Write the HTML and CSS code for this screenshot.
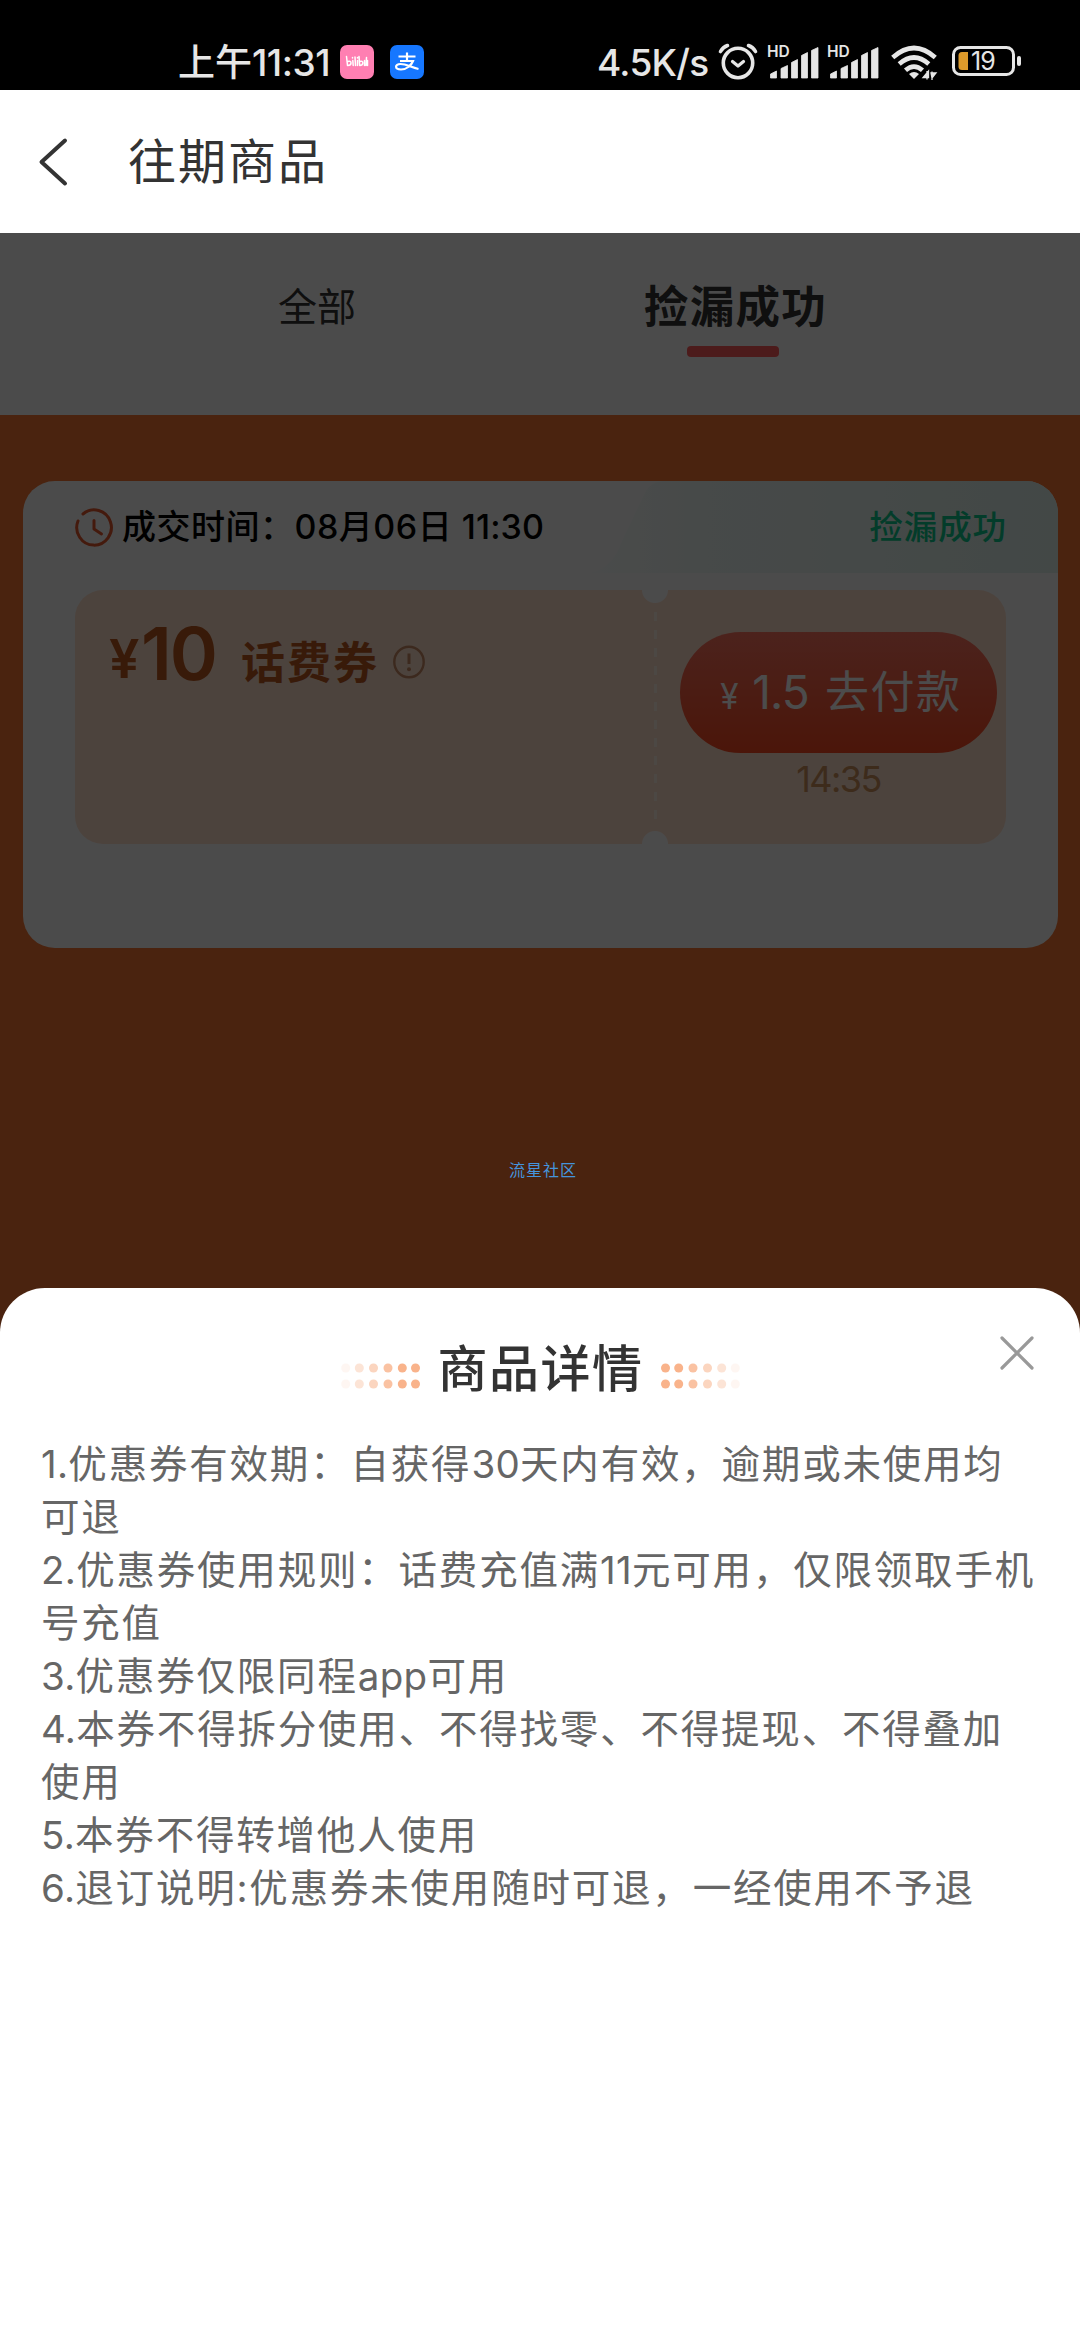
FILE: index.html
```html
<!DOCTYPE html>
<html lang="zh-CN">
<head>
<meta charset="utf-8">
<title>往期商品</title>
<link rel="stylesheet" href="styles.css">
</head>
<body>
<div class="screen">
  <div class="status">
    <div class="status-left">
      <span class="clock-text">上午<span class="clock-digits">11:31</span></span>
      <svg class="app-icon" width="34" height="34" viewBox="0 0 34 34">
        <rect width="34" height="34" rx="7" fill="#ff7fb2"/>
        <g fill="none" stroke="#fff" stroke-width="1.5" stroke-linecap="round" stroke-linejoin="round">
          <path d="M6.5 11.5l1 9M7.5 16.500q3.500-1 3.500 1.500t-3.400 2.500M12.800 15.500l.4 5M12.500 12.500v.6M15 12l.5 8.500M17.500 15.500v5M17.500 12.500v.6M19 11.500l.7 9M19.500 16.500q3.500-1 3.300 1.500t-3.100 2.500M24.500 15.500v5M26.500 12.500l-.5 8M27.500 15.500v5"/>
        </g>
      </svg>
      <svg class="app-icon" width="34" height="34" viewBox="0 0 34 34">
        <rect width="34" height="34" rx="7" fill="#1677ff"/>
        <path d="M8.500 11.500h17M17 7.500v8.500M10 16h13c-1.500 4-6 8.500-12 8.500-6.500 0-6.500-5.500-.5-5.500 6 0 10 3.200 18 5" fill="none" stroke="#fff" stroke-width="2.200"/>
      </svg>
    </div>
    <div class="status-right">
      <span class="speed">4.5K/s</span>
      <svg class="alarm" width="40" height="38" viewBox="0 0 40 38" fill="none" stroke="#e6e6e6" stroke-linecap="round">
        <circle cx="20" cy="20" r="14.700" stroke-width="3.600"/>
        <path d="M2.500 8.500Q5 4 9.500 2.500M37.500 8.500Q35 4 30.500 2.500" stroke-width="3.600"/>
        <path d="M14.500 18.500l5.500 4.500 5.500-4.500" stroke-width="3.200" stroke-linejoin="round"/>
      </svg>
      <div class="signal"><span class="hd">HD</span>
        <svg width="50" height="34" viewBox="0 0 50 34" fill="#e6e6e6"><path d="M1.500 33v-4l6-3v7zM12 33V23.500l6.500-3V33zM22.500 33V17.500l6-3V33zM32.500 33V10.500l6-3V33zM42.500 33V5.500l6.500-3V33z" stroke="#e6e6e6" stroke-linejoin="round" stroke-width=".8"/></svg>
      </div>
      <div class="signal"><span class="hd">HD</span>
        <svg width="50" height="34" viewBox="0 0 50 34" fill="#e6e6e6"><path d="M1.500 33v-4l6-3v7zM12 33V23.500l6.500-3V33zM22.500 33V17.500l6-3V33zM32.500 33V10.500l6-3V33zM42.500 33V5.500l6.500-3V33z" stroke="#e6e6e6" stroke-linejoin="round" stroke-width=".8"/></svg>
      </div>
      <svg class="wifi" width="48" height="36" viewBox="0 0 48 36">
        <g fill="none" stroke="#e6e6e6" stroke-width="4.600"><path d="M1.700 12.500Q23 -6.500 44.300 12.500"/><path d="M8.200 19Q23 6 37.800 19"/><path d="M14.500 25.300Q23 17.800 31.500 25.300"/></g>
        <path d="M23 34l-5-5q5-4 10 0z" fill="#e6e6e6"/>
        <path d="M32 32.500h5.500V26zM36 26v8.500M41 35v-8.500M40 28h5l-4 5z" fill="#e6e6e6" stroke="#e6e6e6" stroke-width="1.300"/>
      </svg>
      <svg class="battery" width="70" height="32" viewBox="0 0 70 32">
        <rect x="1.500" y="2.500" width="60" height="27" rx="7" fill="none" stroke="#e6e6e6" stroke-width="3"/>
        <rect x="65" y="11" width="4" height="10" rx="2" fill="#e6e6e6"/>
        <path d="M10 7h6v18h-6q-3.500 0-3.500-3.500v-11Q6.500 7 10 7z" fill="#dc9a2b"/>
        <text x="19" y="24.500" class="battery-text">19</text>
      </svg>
    </div>
  </div>

  <div class="navbar">
    <svg width="32" height="50" viewBox="0 0 32 50"><path d="M27 3.500L3.500 25 27 46.500" fill="none" stroke="#333" stroke-width="4" stroke-linecap="round" stroke-linejoin="round"/></svg>
    <h1>往期商品</h1>
  </div>

  <div class="page">
    <div class="tabs">
      <div class="tab">全部</div>
      <div class="tab active">捡漏成功</div>
    </div>
    <div class="card">
      <div class="card-head">
        <svg class="ribbon" width="468" height="92" viewBox="0 0 468 92">
          <defs><linearGradient id="mint" x1="0" x2="1"><stop offset="0" stop-color="#f8fcfb"/><stop offset=".25" stop-color="#edf7f4"/><stop offset="1" stop-color="#dff1ec"/></linearGradient></defs>
          <path d="M0 92Q22 88 32 60L54 14Q60 0 74 0H468V92Z" fill="url(#mint)"/>
        </svg>
        <svg class="clock" width="40" height="40" viewBox="0 0 40 40" fill="none" stroke="#e4572e" stroke-width="3" stroke-linecap="round">
          <path d="M9 6A17.300 17.600 0 1 1 4 13"/><path d="M20 12.500V21l7.500 5" stroke-linejoin="round"/>
        </svg>
        <span class="deal">成交时间：08月06日 <span class="deal-time">11:30</span></span>
        <span class="state">捡漏成功</span>
      </div>
      <div class="coupon">
        <div class="worth">
          <span class="yen">¥</span><span class="amount">10</span><span class="kind">话费券</span>
          <svg class="info" width="34" height="36" viewBox="0 0 34 36"><ellipse cx="17" cy="18" rx="14.700" ry="15.300" fill="none" stroke="#c88a64" stroke-width="2.400"/><path d="M17 9.500v10.500" stroke="#c88a64" stroke-width="3"/><circle cx="17" cy="25.200" r="2" fill="#c88a64"/></svg>
        </div>
        <div class="buy">
          <button><span class="byen">¥</span><span class="price">1.5</span><span>去付款</span></button>
          <div class="countdown">14:35</div>
        </div>
      </div>
    </div>
    <div class="mask"></div>
  </div>

  <div class="watermark">流星社区</div>

  <div class="sheet">
    <svg class="close" width="38" height="38" viewBox="0 0 38 38"><path d="M4 4l30 30M34 4L4 34" stroke="#999" stroke-width="3.200" stroke-linecap="round"/></svg>
    <div class="sheet-title">
      <svg width="80" height="26" viewBox="0 0 80 26" fill="#f9b38b">
        <g id="dots">
          <g opacity=".1"><circle cx="5.700" cy="5" r="4.500"/><circle cx="5.700" cy="21" r="4.500"/></g>
          <g opacity=".35"><circle cx="19.300" cy="5" r="4.500"/><circle cx="19.300" cy="21" r="4.500"/></g>
          <g opacity=".55"><circle cx="33.500" cy="5" r="4.500"/><circle cx="33.500" cy="21" r="4.500"/></g>
          <g opacity=".8"><circle cx="48" cy="5" r="4.500"/><circle cx="48" cy="21" r="4.500"/></g>
          <circle cx="62.300" cy="5" r="4.500"/><circle cx="62.300" cy="21" r="4.500"/>
          <circle cx="75.500" cy="5" r="4.500"/><circle cx="75.500" cy="21" r="4.500"/>
        </g>
      </svg>
      <h2>商品详情</h2>
      <svg width="80" height="26" viewBox="0 0 80 26" fill="#f9b38b"><use href="#dots" transform="translate(80 0) scale(-1 1)"/></svg>
    </div>
    <div class="rules">
      <p><span class="num">1.</span>优惠券有效期：自获得<span class="num">30</span>天内有效，逾期或未使用均<br>可退</p>
      <p><span class="num">2.</span>优惠券使用规则：话费充值满<span class="num">11</span>元可用，仅限领取手机<br>号充值</p>
      <p><span class="num">3.</span>优惠券仅限同程<span class="latin">app</span>可用</p>
      <p><span class="num">4.</span>本券不得拆分使用、不得找零、不得提现、不得叠加<br>使用</p>
      <p><span class="num">5.</span>本券不得转增他人使用</p>
      <p><span class="num">6.</span>退订说明:优惠券未使用随时可退，一经使用不予退</p>
    </div>
  </div>
</div>
</body>
</html>
```
FILE: styles.css
```css
* { box-sizing: border-box; margin: 0; padding: 0; }
body { width: 1080px; font-family: Inter, "Noto Sans CJK SC", sans-serif; background: #fff; }
svg { display: block; flex: none; }
.screen { position: relative; width: 1080px; height: 2340px; overflow: hidden; display: flex; flex-direction: column; white-space: nowrap; }

.status { height: 90px; flex: none; background: #000; color: #e6e6e6; display: flex; justify-content: space-between; padding: 34px 58px 0 178px; font-size: 36px; line-height: 54px; }
.status-left, .status-right { display: flex; height: 54px; }
.clock-text { width: 162px; font-weight: 500; font-size: 37px; line-height: 58px; }
.clock-digits { letter-spacing: -.5px; }
.app-icon { margin: 11px 16px 0 0; }
.speed { width: 121px; font-size: 37px; line-height: 57px; font-weight: 500; letter-spacing: -.7px; }
.alarm { margin: 9px 11px 0 0; }
.signal { position: relative; width: 50px; margin-right: 10px; padding-top: 11px; }
.hd { position: absolute; left: -2px; top: 9px; font: 600 15.500px/18px Inter, sans-serif; }
.wifi { margin: 11px 13px 0 2px; }
.battery { margin-top: 11px; }
.battery-text { font: 400 25px Inter, sans-serif; fill: #e6e6e6; letter-spacing: -1px; }

.navbar { height: 143px; flex: none; background: #fff; display: flex; align-items: center; padding-left: 38px; }
.navbar h1 { margin-left: 58px; font-size: 48px; font-weight: 400; line-height: 72px; letter-spacing: 2px; color: #333; }

.page { position: relative; height: 2107px; flex: none; background: #f77532; }
.mask { position: absolute; inset: 0; background: rgba(0, 0, 0, .7); }
.tabs { height: 182px; background: #fcfcfc; display: grid; grid-template-columns: 416px 416px; justify-content: center; padding: 39px 30px 0 0; text-align: center; }
.tab { font-size: 39px; line-height: 70px; color: #333; }
.tab.active { font-size: 44.500px; font-weight: 600; letter-spacing: 1.300px; padding-top: 0; text-indent: 5px; }
.tab.active::after { content: ""; display: block; width: 92px; height: 11px; margin: 4px auto 0; border-radius: 4px; background: #ff5a5d; }

.card { width: 1035px; height: 467px; margin: 66px 0 0 23px; border-radius: 32px; background: #fcfcfc; overflow: hidden; }
.card-head { position: relative; height: 92px; display: flex; align-items: center; padding: 0 51px 0 51px; }
.ribbon { position: absolute; right: 0; top: 0; }
.clock { margin-top: 2px; }
.deal { margin-left: 8px; font-size: 34px; line-height: 50px; font-weight: 500; color: #000; letter-spacing: .5px; }
.deal-time { letter-spacing: .1px; }
.state { position: relative; margin-left: auto; font-size: 33.500px; line-height: 50px; font-weight: 500; letter-spacing: .9px; color: #0cc98c; }

.coupon { width: 931px; height: 254px; margin: 17px 0 0 52px; border-radius: 28px; display: grid; grid-template-columns: 580px 351px;
  background:
    radial-gradient(circle at 580px 0, #fcfcfc 12.500px, transparent 13.500px),
    radial-gradient(circle at 580px 254px, #fcfcfc 12.500px, transparent 13.500px),
    repeating-linear-gradient(#fff0e4 0 9px, transparent 9px 18px) 579px 22px / 3px 210px no-repeat,
    #ffe0cc; }
.worth { display: flex; padding: 20px 0 0 34px; height: 100px; color: #bd591f; align-items: flex-start; font-weight: 600; }
.yen { width: 32px; font-size: 54px; line-height: 97px; }
.amount { width: 100px; font-size: 73px; line-height: 87px; letter-spacing: -2px; }
.kind { font-size: 44px; line-height: 60px; letter-spacing: 2px; margin-top: 23px; width: 151px; }
.info { margin-top: 34px; }
.buy { padding: 42px 0 0 25px; }
button { display: flex; width: 317px; height: 121px; border: 0; border-radius: 61px; background: linear-gradient(#fd7561, #fa4921); color: #fff; font: 400 44px/121px Inter, "Noto Sans CJK SC", sans-serif; letter-spacing: 1.500px; padding-left: 34px; }
.byen { font-size: 35px; line-height: 128px; width: 34px; transform: scaleX(.95); transform-origin: 0 0; }
.price { width: 77px; margin-left: -6px; padding-right: 0; font-size: 46px; line-height: 120px; letter-spacing: -1px; }
button span:last-child { margin-left: 6px; }
.countdown { width: 317px; text-align: center; font-size: 36px; line-height: 52px; color: #cb8f5c; letter-spacing: -1.600px; }

.watermark { position: absolute; left: 3px; width: 1080px; top: 1158px; text-align: center; font-size: 16px; line-height: 24px; letter-spacing: 1px; color: #4594dc; }

.sheet { position: absolute; left: 0; right: 0; bottom: 0; top: 1288px; background: #fff; border-radius: 45px 45px 0 0; padding: 41px 0 0; }
.close { position: absolute; right: 44px; top: 46px; }
.sheet-title { display: flex; justify-content: center; align-items: flex-start; height: 76px; }
.sheet-title svg { margin-top: 34px; }
.sheet-title h2 { width: 241px; padding: 4px 0 0 18px; font-size: 50px; line-height: 72px; letter-spacing: 1.500px; font-weight: 500; color: #333; }
.rules { margin: 33px 0 0 41px; font-size: 38.500px; line-height: 53px; letter-spacing: 1.800px; color: #666; }
.num { letter-spacing: .3px; }
.latin { letter-spacing: .3px; }
```
